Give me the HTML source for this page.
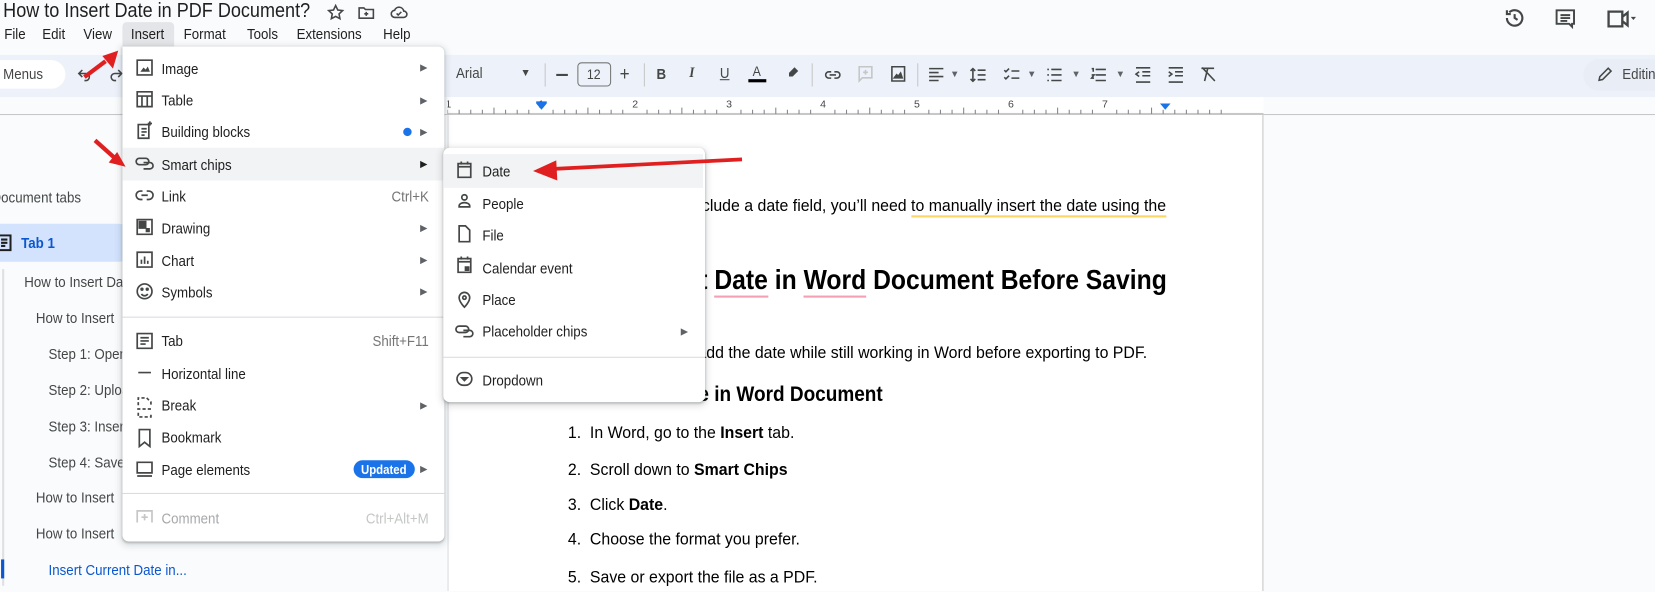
<!DOCTYPE html>
<html><head><meta charset="utf-8"><style>
*{margin:0;padding:0;box-sizing:border-box}
html,body{width:1655px;height:592px;overflow:hidden}
body{background:#f9fbfd;font-family:"Liberation Sans",Arial,sans-serif;color:#1f1f1f;position:relative}
#w{position:absolute;left:0;top:0;width:1568px;height:560px;transform:scale(1.0555);transform-origin:0 0;overflow:hidden}
.t{position:absolute;white-space:nowrap;transform:scaleX(.9);transform-origin:left center;line-height:1}
.r{transform-origin:right center;text-align:right}
.d{transform:scaleX(.94)}
.a{position:absolute}
.arr{position:absolute;font-size:9px;color:#5f6368}
</style></head><body><div id="w">
<div class="t" style="left:3px;top:1px;font-size:19px;color:#1f1f1f">How to Insert Date in PDF Document?</div>
<svg class="a" style="left:309px;top:3px" width="18" height="18" viewBox="0 0 24 24" fill="none" stroke="#444746" stroke-width="2"><path d="M12 3l2.7 5.6 6.1.8-4.5 4.2 1.1 6L12 16.7 6.6 19.6l1.1-6L3.2 9.4l6.1-.8z"/></svg>
<svg class="a" style="left:338px;top:3px" width="18" height="18" viewBox="0 0 24 24" fill="none" stroke="#444746" stroke-width="2"><path d="M3 6h6l2 2h10v11H3z M12 11v5 M9.5 13.5h5"/></svg>
<svg class="a" style="left:368px;top:3px" width="20" height="18" viewBox="0 0 24 24" fill="none" stroke="#444746" stroke-width="2"><path d="M7 18h11a4 4 0 0 0 0-8 6 6 0 0 0-11.5-1A4.5 4.5 0 0 0 7 18z M9 13l2 2 4-4"/></svg>
<div class="t" style="left:4px;top:25px;font-size:14px">File</div>
<div class="t" style="left:40px;top:25px;font-size:14px">Edit</div>
<div class="t" style="left:79px;top:25px;font-size:14px">View</div>
<div class="a" style="left:116px;top:21px;width:49px;height:23px;background:#e3e5e8;border-radius:4px 4px 0 0"></div>
<div class="t" style="left:124px;top:25px;font-size:14px">Insert</div>
<div class="t" style="left:174px;top:25px;font-size:14px">Format</div>
<div class="t" style="left:234px;top:25px;font-size:14px">Tools</div>
<div class="t" style="left:281px;top:25px;font-size:14px">Extensions</div>
<div class="t" style="left:363px;top:25px;font-size:14px">Help</div>
<svg class="a" style="left:1424px;top:6px" width="22" height="22" viewBox="0 0 24 24" fill="none" stroke="#444746" stroke-width="2.2"><path d="M4 12a8 8 0 1 0 2.5-5.8 M4 4v4h4 M12 8v4l3 2"/></svg>
<svg class="a" style="left:1472px;top:7px" width="22" height="22" viewBox="0 0 24 24" fill="none" stroke="#444746" stroke-width="2"><path d="M3 3h18v14h-2v3l-3-3H3z M7 8h10 M7 11h10 M7 14h7"/></svg>
<svg class="a" style="left:1522px;top:8px" width="28" height="20" viewBox="0 0 28 20" fill="none" stroke="#444746" stroke-width="2.2"><path d="M2 3h13v14H2z M15 8l5-4v12l-5-4"/><path d="M23 8h5l-2.5 3z" fill="#444746" stroke="none"/></svg>
<div class="a" style="left:0;top:52px;width:1568px;height:40px;background:#edf2fa"></div>
<div class="a" style="left:-20px;top:57px;width:82px;height:27px;background:#fff;border-radius:14px"></div>
<div class="t" style="left:3px;top:63px;font-size:14px;color:#444746">Menus</div>
<svg class="a" style="left:72px;top:63px" width="16" height="16" viewBox="0 0 24 24" fill="none" stroke="#444746" stroke-width="2.2"><path d="M9 5L4 10l5 5 M4 10h10a5 5 0 0 1 0 10h-2"/></svg>
<svg class="a" style="left:102px;top:63px" width="16" height="16" viewBox="0 0 24 24" fill="none" stroke="#444746" stroke-width="2.2"><path d="M15 5l5 5-5 5 M20 10H10a5 5 0 0 0 0 10h2"/></svg>
<div class="t" style="left:432px;top:62px;font-size:14px;color:#444746">Arial</div>
<div class="arr" style="left:493px;top:64px;font-size:10px;color:#444746">▼</div>
<div class="a" style="left:516px;top:60px;width:1px;height:22px;background:#c7c7c7"></div>
<div class="a" style="left:527px;top:70px;width:11px;height:2px;background:#444746"></div>
<div class="a" style="left:547px;top:59px;width:32px;height:23px;border:1px solid #747775;border-radius:4px"></div>
<div class="t" style="left:556px;top:64px;font-size:13px;color:#444746">12</div>
<div class="t" style="left:587px;top:61px;font-size:18px;color:#444746">+</div>
<div class="a" style="left:610px;top:60px;width:1px;height:22px;background:#c7c7c7"></div>
<div class="t" style="left:622px;top:63px;font-size:14px;font-weight:bold;color:#444746">B</div>
<div class="t" style="left:653px;top:63px;font-size:14px;font-weight:bold;font-style:italic;color:#444746;font-family:'Liberation Serif',serif">I</div>
<div class="t" style="left:682px;top:62px;font-size:14px;color:#444746;text-decoration:underline">U</div>
<div class="t" style="left:713px;top:61px;font-size:13px;color:#444746">A</div>
<div class="a" style="left:709px;top:75px;width:17px;height:3px;background:#000"></div>
<svg class="a" style="left:744px;top:62px" width="14" height="14" viewBox="0 0 24 24" fill="#444746"><path d="M15 3l6 6-9 9H6v-6z"/></svg>
<div class="a" style="left:769px;top:60px;width:1px;height:22px;background:#c7c7c7"></div>
<svg class="a" style="left:780px;top:62px" width="18" height="18" viewBox="0 0 24 24" fill="none" stroke="#444746" stroke-width="2"><path d="M10 8H7a4 4 0 0 0 0 8h3 M14 8h3a4 4 0 0 1 0 8h-3 M8 12h8"/></svg>
<svg class="a" style="left:811px;top:61px" width="18" height="18" viewBox="0 0 24 24" fill="none" stroke="#c4c7c5" stroke-width="2"><path d="M4 3h16v14H8l-4 4z M12 7v6 M9 10h6"/></svg>
<svg class="a" style="left:842px;top:61px" width="18" height="18" viewBox="0 0 24 24" fill="none" stroke="#444746" stroke-width="2"><path d="M4 3h16v18H4z"/><path d="M7 17l3-4 2 2 3-4 2 6z" fill="#444746"/></svg>
<div class="a" style="left:869px;top:60px;width:1px;height:22px;background:#c7c7c7"></div>
<svg class="a" style="left:878px;top:62px" width="18" height="18" viewBox="0 0 24 24" fill="none" stroke="#444746" stroke-width="2"><path d="M3 4h18 M3 9h12 M3 14h18 M3 19h12"/></svg>
<div class="arr" style="left:900px;top:65px">▼</div>
<svg class="a" style="left:918px;top:62px" width="18" height="18" viewBox="0 0 24 24" fill="none" stroke="#444746" stroke-width="2"><path d="M5 4v16 M2 7l3-3 3 3 M2 17l3 3 3-3 M11 6h10 M11 12h10 M11 18h10"/></svg>
<svg class="a" style="left:950px;top:62px" width="18" height="18" viewBox="0 0 24 24" fill="none" stroke="#444746" stroke-width="2"><path d="M2 6l2 2 4-4 M2 15l2 2 4-4 M11 7h10 M11 16h10"/></svg>
<div class="arr" style="left:973px;top:65px">▼</div>
<svg class="a" style="left:990px;top:62px" width="18" height="18" viewBox="0 0 24 24" fill="none" stroke="#444746" stroke-width="2"><path d="M3 5h2 M3 12h2 M3 19h2 M8 5h13 M8 12h13 M8 19h13"/></svg>
<div class="arr" style="left:1015px;top:65px">▼</div>
<svg class="a" style="left:1032px;top:62px" width="18" height="18" viewBox="0 0 24 24" fill="none" stroke="#444746" stroke-width="2"><path d="M3 4h2v4 M3 12h3l-3 4h3 M8 5h13 M8 12h13 M8 19h13"/></svg>
<div class="arr" style="left:1057px;top:65px">▼</div>
<svg class="a" style="left:1074px;top:62px" width="18" height="18" viewBox="0 0 24 24" fill="none" stroke="#444746" stroke-width="2"><path d="M3 3h18 M11 8h10 M11 13h10 M3 21h18 M7 8l-4 3 4 3"/></svg>
<svg class="a" style="left:1105px;top:62px" width="18" height="18" viewBox="0 0 24 24" fill="none" stroke="#444746" stroke-width="2"><path d="M3 3h18 M11 8h10 M11 13h10 M3 21h18 M3 8l4 3-4 3"/></svg>
<svg class="a" style="left:1136px;top:61px" width="18" height="18" viewBox="0 0 24 24" fill="none" stroke="#444746" stroke-width="2"><path d="M3 5h16 M11 5l-4 16 M4 4l16 17"/></svg>
<div class="a" style="left:1500px;top:56px;width:200px;height:30px;background:#e9eef6;border-radius:15px"></div>
<svg class="a" style="left:1513px;top:62px" width="16" height="16" viewBox="0 0 24 24" fill="none" stroke="#444746" stroke-width="2.2"><path d="M3 21l1-5L16 4l4 4L8 20z"/></svg>
<div class="t" style="left:1537px;top:63px;font-size:14px;color:#444746">Editing</div>
<div class="a" style="left:424px;top:92px;width:773px;height:16px;border-bottom:1px solid #c7c7c7;background:#fff"></div>
<div class="a" style="left:0;top:108px;width:1568px;height:1px;background:#c7c7c7"></div>
<svg class="a" style="left:424px;top:92px" width="773" height="17">
<g stroke="#80868b" stroke-width="1">
<path d="M0 12v4 M11 12v4 M22 12v4 M33 12v4 M44 10v6 M55 12v4 M66 12v4 M77 12v4 M100 12v4 M111 12v4 M122 12v4 M133 10v6 M144 12v4 M155 12v4 M166 12v4 M189 12v4 M200 12v4 M211 12v4 M222 10v6 M233 12v4 M244 12v4 M255 12v4 M278 12v4 M289 12v4 M300 12v4 M311 10v6 M322 12v4 M333 12v4 M344 12v4 M367 12v4 M378 12v4 M389 12v4 M400 10v6 M411 12v4 M422 12v4 M433 12v4 M456 12v4 M467 12v4 M478 12v4 M489 10v6 M500 12v4 M511 12v4 M522 12v4 M545 12v4 M556 12v4 M567 12v4 M578 10v6 M589 12v4 M600 12v4 M611 12v4 M634 12v4 M645 12v4 M656 12v4 M667 10v6 M678 12v4 M689 12v4 M700 12v4 M711 12v4 M722 12v4 M733 12v4"/></g>
<g font-size="10" fill="#444746" font-family="Liberation Sans"><text x="-2" y="10">1</text><text x="86" y="10">1</text><text x="175" y="10">2</text><text x="264" y="10">3</text><text x="353" y="10">4</text><text x="442" y="10">5</text><text x="531" y="10">6</text><text x="620" y="10">7</text></g>
<path d="M84 6h10l-5 6z M84 4h10v2H84z" fill="#1a73e8"/><path d="M675 6h10l-5 6z" fill="#1a73e8"/>
</svg>
<div class="a" style="left:424px;top:109px;width:773px;height:451px;background:#fff;border-left:1px solid #dadce0;border-right:1px solid #c7c7c7"></div>
<div class="t r d" style="right:463px;top:188px;font-size:16px;color:#000">Simply include a date field, you’ll need <span style="border-bottom:2px solid #fdd663">to manually insert the date using the</span></div>
<div class="t r" style="right:463px;top:252px;font-size:26px;font-weight:bold;color:#000">Insert Current <span style="border-bottom:2px solid #f4a0b4">Date</span> in <span style="border-bottom:2px solid #f4a0b4">Word</span> Document Before Saving</div>
<div class="t r d" style="right:481px;top:327px;font-size:16px;color:#000">If you want to add the date while still working in Word before exporting to PDF.</div>
<div class="t r" style="right:732px;top:364px;font-size:20px;font-weight:bold;color:#000">Insert Date in Word Document</div>
<div class="t d" style="left:538px;top:403px;font-size:16px;color:#000">1.&nbsp;&nbsp;In Word, go to the <b>Insert</b> tab.</div>
<div class="t d" style="left:538px;top:438px;font-size:16px;color:#000">2.&nbsp;&nbsp;Scroll down to <b>Smart Chips</b></div>
<div class="t d" style="left:538px;top:471px;font-size:16px;color:#000">3.&nbsp;&nbsp;Click <b>Date</b>.</div>
<div class="t d" style="left:538px;top:504px;font-size:16px;color:#000">4.&nbsp;&nbsp;Choose the format you prefer.</div>
<div class="t d" style="left:538px;top:540px;font-size:16px;color:#000">5.&nbsp;&nbsp;Save or export the file as a PDF.</div>
<div class="t" style="left:-8px;top:180px;font-size:14px;color:#444746;font-weight:500">Document tabs</div>
<div class="a" style="left:0;top:212px;width:130px;height:36px;background:#d3e3fd;border-radius:0 18px 18px 0"></div>
<svg class="a" style="left:-3px;top:222px" width="14" height="16" viewBox="0 0 14 16" fill="none" stroke="#1f1f1f" stroke-width="2"><path d="M1 1h12v14H1z M4 5h6 M4 8h6 M4 11h4"/></svg>
<div class="t" style="left:20px;top:223px;font-size:14px;color:#0b57d0;font-weight:bold">Tab 1</div>
<div class="a" style="left:2px;top:255px;width:2px;height:300px;background:#e0e0e0"></div>
<div class="a" style="left:1px;top:530px;width:3px;height:18px;background:#0b57d0"></div>
<div class="t" style="left:23px;top:260px;font-size:14px;color:#444746">How to Insert Date</div>
<div class="t" style="left:34px;top:294px;font-size:14px;color:#444746">How to Insert</div>
<div class="t" style="left:46px;top:328px;font-size:14px;color:#444746">Step 1: Open</div>
<div class="t" style="left:46px;top:362px;font-size:14px;color:#444746">Step 2: Upload</div>
<div class="t" style="left:46px;top:397px;font-size:14px;color:#444746">Step 3: Insert</div>
<div class="t" style="left:46px;top:431px;font-size:14px;color:#444746">Step 4: Save</div>
<div class="t" style="left:34px;top:464px;font-size:14px;color:#444746">How to Insert</div>
<div class="t" style="left:34px;top:498px;font-size:14px;color:#444746">How to Insert</div>
<div class="t" style="left:46px;top:533px;font-size:14px;color:#0b57d0">Insert Current Date in...</div>
<div class="a" style="left:116px;top:44px;width:305px;height:469px;background:#fff;border-radius:0 6px 6px 6px;box-shadow:0 2px 6px 2px rgba(60,64,67,.15),0 1px 2px rgba(60,64,67,.3)"></div>
<div class="a" style="left:116px;top:140px;width:305px;height:31px;background:#f1f3f4"></div>
<div class="a" style="left:116px;top:300px;width:305px;height:1px;background:#dadce0"></div>
<div class="a" style="left:116px;top:467px;width:305px;height:1px;background:#dadce0"></div>
<svg class="a" style="left:128px;top:55px" width="18" height="440" viewBox="0 0 18 440" fill="none" stroke="#444746" stroke-width="1.6">
<path d="M2 2h14v14H2z"/><path d="M5 13l3-4 2 2 2-3 2 5z" fill="#444746" stroke="none"/>
<path d="M2 32h14v14H2z M2 36h14 M6.5 36v10 M11.5 36v10"/>
<path d="M3 63h10v13H3z M6 67h5 M6 70h5 M6 73h3 M14 60v4 M12 62h4"/>
<path d="M4 95h6a3 3 0 0 1 0 6H4a3 3 0 0 1 0-6z M8 99h6a3 3 0 0 1 0 6H8"/>
<path d="M7 126H5a4 4 0 0 0 0 8h2 M11 126h2a4 4 0 0 1 0 8h-2 M6 130h6"/>
<path d="M2 153h14v14H2z"/><path d="M4 155h6v6H4z" fill="#444746"/><path d="M10 161h4v4h-4z" fill="#444746" stroke="none"/>
<path d="M2 184h14v14H2z M6 195v-4 M9 195v-7 M12 195v-3"/>
<circle cx="9" cy="221" r="7"/><path d="M6 223.5a3.5 3.5 0 0 0 6 0"/><circle cx="6.5" cy="219" r=".8" fill="#444746"/><circle cx="11.5" cy="219" r=".8" fill="#444746"/>
<path d="M2 261h14v14H2z M5 265h8 M5 268h8 M5 271h5"/>
<path d="M3 298h12"/>
<path d="M3 329v-7h8l4 4v3 M3 336v4h12v-4 M2 332.5h14" stroke-dasharray="3 2"/>
<path d="M4 352h10v16l-5-4-5 4z"/>
<path d="M2 383h14v10H2z M2 396h14"/>
<path d="M2 429h14v12H6l-4 4z M9 432v6 M6 435h6" stroke="#c4c7c5"/>
</svg>
<div class="t" style="left:153px;top:58px;font-size:14px">Image</div>
<div class="t" style="left:153px;top:88px;font-size:14px">Table</div>
<div class="t" style="left:153px;top:118px;font-size:14px">Building blocks</div>
<div class="t" style="left:153px;top:149px;font-size:14px">Smart chips</div>
<div class="t" style="left:153px;top:179px;font-size:14px">Link</div>
<div class="t" style="left:153px;top:209px;font-size:14px">Drawing</div>
<div class="t" style="left:153px;top:240px;font-size:14px">Chart</div>
<div class="t" style="left:153px;top:270px;font-size:14px">Symbols</div>
<div class="t" style="left:153px;top:316px;font-size:14px">Tab</div>
<div class="t" style="left:153px;top:347px;font-size:14px">Horizontal line</div>
<div class="t" style="left:153px;top:377px;font-size:14px">Break</div>
<div class="t" style="left:153px;top:407px;font-size:14px">Bookmark</div>
<div class="t" style="left:153px;top:438px;font-size:14px">Page elements</div>
<div class="t" style="left:153px;top:484px;font-size:14px;color:#a6a8aa">Comment</div>
<div class="t r" style="right:1162px;top:179px;font-size:14px;color:#757575">Ctrl+K</div>
<div class="t r" style="right:1162px;top:316px;font-size:14px;color:#757575">Shift+F11</div>
<div class="t r" style="right:1162px;top:484px;font-size:14px;color:#c4c7c5">Ctrl+Alt+M</div>
<div class="arr" style="left:398px;top:59px">▶</div>
<div class="arr" style="left:398px;top:90px">▶</div>
<div class="arr" style="left:398px;top:120px">▶</div>
<div class="arr" style="left:398px;top:150px;color:#1f1f1f">▶</div>
<div class="arr" style="left:398px;top:211px">▶</div>
<div class="arr" style="left:398px;top:241px">▶</div>
<div class="arr" style="left:398px;top:271px">▶</div>
<div class="arr" style="left:398px;top:379px">▶</div>
<div class="arr" style="left:398px;top:439px">▶</div>
<div class="a" style="left:382px;top:121px;width:8px;height:8px;border-radius:50%;background:#1a73e8"></div>
<div class="a" style="left:335px;top:436px;width:58px;height:17px;border-radius:9px;background:#1a73e8"></div>
<div class="t" style="left:342px;top:439px;font-size:12px;color:#fff;font-weight:bold">Updated</div>
<div class="a" style="left:420px;top:140px;width:248px;height:241px;background:#fff;border-radius:6px;box-shadow:0 2px 6px 2px rgba(60,64,67,.15),0 1px 2px rgba(60,64,67,.3)"></div>
<div class="a" style="left:420px;top:146px;width:246px;height:32px;background:#f1f3f4"></div>
<div class="a" style="left:420px;top:338px;width:248px;height:1px;background:#dadce0"></div>
<svg class="a" style="left:431px;top:152px" width="18" height="220" viewBox="0 0 18 220" fill="none" stroke="#444746" stroke-width="1.6">
<path d="M3 3h12v13H3z M3 6h12 M6 1v3 M12 1v3"/>
<circle cx="9" cy="35" r="2.5"/><path d="M4 44v-1a5 3 0 0 1 10 0v1z"/>
<path d="M4 62h6l4 4v11H4z"/>
<path d="M3 93h12v13H3z M3 96h12 M6 91v3 M12 91v3"/><path d="M10 101h3v3h-3z" fill="#444746"/>
<path d="M9 139s5-5 5-9a5 5 0 0 0-10 0c0 4 5 9 5 9z"/><circle cx="9" cy="130" r="1.6"/>
<path d="M4 157h6a3 3 0 0 1 0 6H4a3 3 0 0 1 0-6z M8 161h6a3 3 0 0 1 0 6H8"/>
<rect x="2" y="201" width="14" height="12" rx="6"/><path d="M6.5 206h5l-2.5 2.5z" fill="#444746"/>
</svg>
<div class="t" style="left:457px;top:155px;font-size:14px">Date</div>
<div class="t" style="left:457px;top:186px;font-size:14px">People</div>
<div class="t" style="left:457px;top:216px;font-size:14px">File</div>
<div class="t" style="left:457px;top:247px;font-size:14px">Calendar event</div>
<div class="t" style="left:457px;top:277px;font-size:14px">Place</div>
<div class="t" style="left:457px;top:307px;font-size:14px">Placeholder chips</div>
<div class="t" style="left:457px;top:353px;font-size:14px">Dropdown</div>
<div class="arr" style="left:645px;top:309px">▶</div>
<svg class="a" style="left:0;top:0" width="1568" height="560" fill="#e02020" stroke="#e02020">
<path d="M80 73L100 58" stroke-width="4"/><path d="M112 48l-5 17-10-12z" stroke="none"/>
<path d="M90 133L108 149" stroke-width="4"/><path d="M119 158l-16-4 8-10z" stroke="none"/>
<path d="M703 151L525 160" stroke-width="3.5"/><path d="M505 162l22-10 1 19z" stroke="none"/>
</svg>
</div></body></html>
